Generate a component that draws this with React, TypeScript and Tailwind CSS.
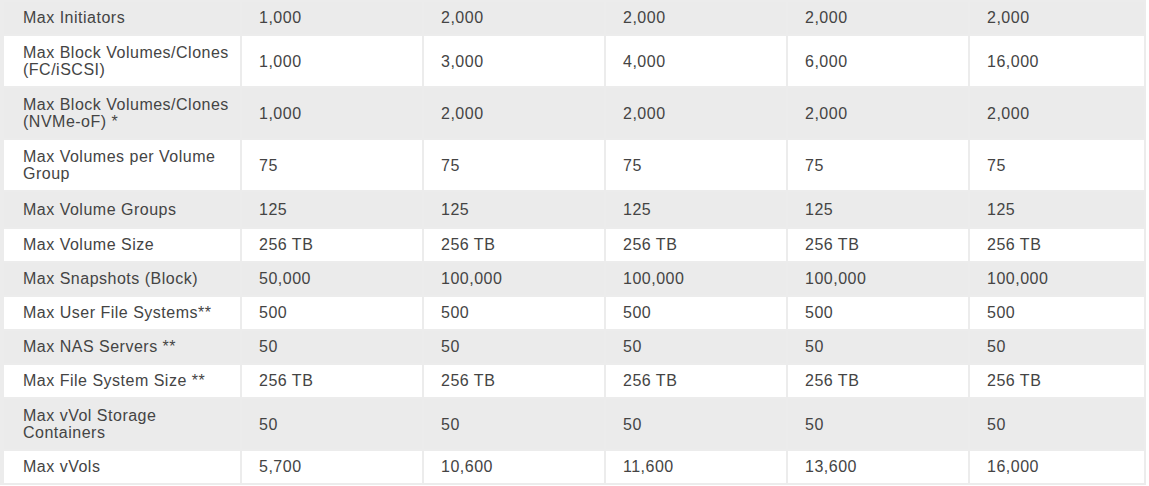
import React from 'react';

type Row = {
  label: React.ReactNode;
  values: string[];
  size?: 'double' | 'tall';
};

const rows: Row[] = [
  { label: 'Max Initiators', values: ['1,000', '2,000', '2,000', '2,000', '2,000'] },
  {
    label: (
      <>
        Max Block Volumes/Clones
        <br />
        (FC/iSCSI)
      </>
    ),
    values: ['1,000', '3,000', '4,000', '6,000', '16,000'],
    size: 'double',
  },
  {
    label: (
      <>
        Max Block Volumes/Clones
        <br />
        (NVMe-oF) *
      </>
    ),
    values: ['1,000', '2,000', '2,000', '2,000', '2,000'],
    size: 'double',
  },
  {
    label: (
      <>
        Max Volumes per Volume
        <br />
        Group
      </>
    ),
    values: ['75', '75', '75', '75', '75'],
    size: 'double',
  },
  { label: 'Max Volume Groups', values: ['125', '125', '125', '125', '125'], size: 'tall' },
  { label: 'Max Volume Size', values: ['256 TB', '256 TB', '256 TB', '256 TB', '256 TB'] },
  { label: 'Max Snapshots (Block)', values: ['50,000', '100,000', '100,000', '100,000', '100,000'] },
  { label: 'Max User File Systems**', values: ['500', '500', '500', '500', '500'] },
  { label: 'Max NAS Servers **', values: ['50', '50', '50', '50', '50'] },
  { label: 'Max File System Size **', values: ['256 TB', '256 TB', '256 TB', '256 TB', '256 TB'] },
  {
    label: (
      <>
        Max vVol Storage
        <br />
        Containers
      </>
    ),
    values: ['50', '50', '50', '50', '50'],
    size: 'double',
  },
  { label: 'Max vVols', values: ['5,700', '10,600', '11,600', '13,600', '16,000'] },
];

const rowClass = (size?: Row['size']) => {
  switch (size) {
    case 'double':
      return 'leading-[17px]';
    case 'tall':
      return 'leading-[16px] h-[35px]';
    default:
      return 'leading-[16px]';
  }
};

export default function App() {
  return (
    <div className="min-h-[486px] w-[1149px] bg-white">
      <table
        className="table-fixed w-[1146px] border-separate border-spacing-[2px] border-l-2 border-[#ececec] bg-[#ececec] text-[16px] tracking-[0.5px] text-[#444444]"
        style={{ fontFamily: '"Liberation Sans", Arial, sans-serif' }}
      >
        <colgroup>
          <col className="w-[236px]" />
          <col className="w-[180px]" />
          <col className="w-[180px]" />
          <col className="w-[180px]" />
          <col className="w-[180px]" />
          <col className="w-[174px]" />
        </colgroup>
        <tbody>
          {rows.map((row, i) => {
            const bg = i % 2 === 0 ? 'bg-[#ebebeb]' : 'bg-white';
            return (
              <tr key={i} className={`${bg} ${rowClass(row.size)}`}>
                <td className="pl-[19px] pr-2 py-2 align-middle text-left">{row.label}</td>
                {row.values.map((v, j) => (
                  <td key={j} className="pl-[17px] pr-2 py-2 align-middle text-left">
                    {v}
                  </td>
                ))}
              </tr>
            );
          })}
        </tbody>
      </table>
    </div>
  );
}
